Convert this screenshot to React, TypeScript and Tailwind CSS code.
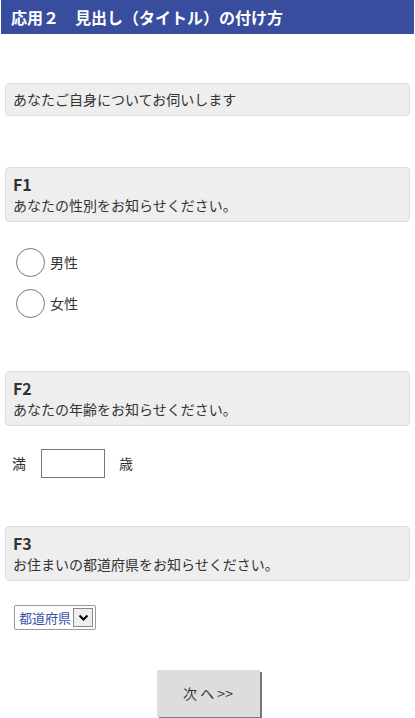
import React from "react";

const font = { fontFamily: '"Noto Sans CJK JP", "Noto Sans", sans-serif' };

function QBox({ label, text }: { label?: string; text: string }) {
  return (
    <div className="mx-[5px] rounded-[4px] border border-[#dddddd] bg-[#eeeeee] px-[7px] pt-[5px] pb-[6px] text-[#333333]">
      {label && <div className="text-[16px] font-bold leading-[22px]">{label}</div>}
      <div className="text-[14px] leading-[20px]">{text}</div>
    </div>
  );
}

function Radio({ label }: { label: string }) {
  return (
    <div className="flex items-center">
      <span className="block h-[29px] w-[29px] rounded-full border-[1.5px] border-[#777777] bg-white" />
      <span className="ml-[5px] text-[14px] text-[#333333]">{label}</span>
    </div>
  );
}

export default function App() {
  return (
    <div className="w-[415px] min-h-[718px] bg-white" style={font}>
      <div className="mx-px flex h-[34px] items-center bg-[#394d9f] pl-[10px] text-[16px] font-bold text-white">
        応用２　見出し（タイトル）の付け方
      </div>

      <div className="mt-[49px]">
        <QBox text="あなたご自身についてお伺いします" />
      </div>

      <div className="mt-[51px]">
        <QBox label="F1" text="あなたの性別をお知らせください。" />
      </div>

      <div className="mt-[26px] ml-[16px] flex flex-col gap-[12px]">
        <Radio label="男性" />
        <Radio label="女性" />
      </div>

      <div className="mt-[53px]">
        <QBox label="F2" text="あなたの年齢をお知らせください。" />
      </div>

      <div className="mt-[23px] ml-[12px] flex items-center text-[14px] text-[#333333]">
        <span>満</span>
        <input
          type="text"
          className="ml-[15px] h-[29px] w-[64px] border border-[#777777] bg-white outline-none"
        />
        <span className="ml-[14px]">歳</span>
      </div>

      <div className="mt-[48px]">
        <QBox label="F3" text="お住まいの都道府県をお知らせください。" />
      </div>

      <div className="mt-[24px] ml-[14px] flex">
        <div className="flex h-[25px] w-[82px] items-center whitespace-nowrap rounded-[2px] border border-[#999999] bg-white pl-[4px] pr-[2px]">
          <span className="shrink-0 text-[13px] leading-none text-[#3b4fa6]">都道府県</span>
          <span className="ml-[2px] flex h-[19px] w-[20px] shrink-0 items-center justify-center border border-[#888888] bg-[#eeeeee]">
            <svg width="11" height="8" viewBox="0 0 11 8">
              <path d="M1.5 1.5 L5.5 5.5 L9.5 1.5" fill="none" stroke="#000" strokeWidth="2" />
            </svg>
          </span>
        </div>
      </div>

      <div className="mt-[40px] flex justify-center">
        <button className="ml-[1px] h-[47px] w-[103px] bg-[#dddddd] text-[14px] text-[#333333] shadow-[2px_2px_0_#777777]">
          次 へ &gt;&gt;
        </button>
      </div>
    </div>
  );
}
